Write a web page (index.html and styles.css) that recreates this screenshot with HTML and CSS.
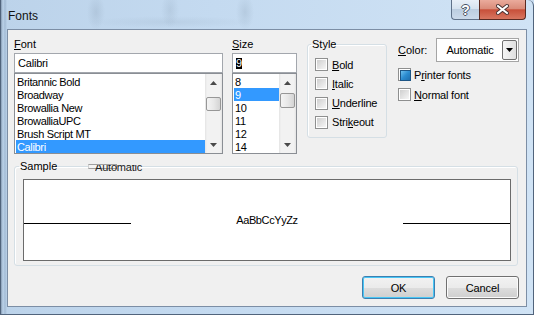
FILE: index.html
```html
<!DOCTYPE html>
<html lang="en">
<head>
<meta charset="utf-8">
<title>Fonts</title>
<link rel="stylesheet" href="styles.css">
</head>
<body>
<div class="window">
  <div class="titlebar">
    <span class="title">Fonts</span>
    <div class="caption">
      <div class="cap help"><span class="q">?</span></div>
      <div class="cap close">
        <svg width="13" height="11" viewBox="0 0 13 11"><path d="M2 2 L11 9 M11 2 L2 9" stroke="#4a3030" stroke-width="4" stroke-linecap="square"/><path d="M2 2 L11 9 M11 2 L2 9" stroke="#fff" stroke-width="2" stroke-linecap="square"/></svg>
      </div>
    </div>
  </div>
  <div class="client">
    <div class="top">
      <div class="col col-font">
        <div class="label"><u>F</u>ont</div>
        <div class="textbox">Calibri</div>
        <div class="listbox">
          <div class="items">
            <div class="item">Britannic Bold</div>
            <div class="item">Broadway</div>
            <div class="item">Browallia New</div>
            <div class="item">BrowalliaUPC</div>
            <div class="item">Brush Script MT</div>
            <div class="item sel">Calibri</div>
          </div>
          <div class="vscroll">
            <div class="sb-btn"><svg width="7" height="4" viewBox="0 0 7 4"><path d="M3.5 0 L7 4 L0 4Z" fill="#4a4a4a"/></svg></div>
            <div class="sb-track"><div class="thumb thumb-font"></div></div>
            <div class="sb-btn"><svg width="7" height="4" viewBox="0 0 7 4"><path d="M0 0 L7 0 L3.5 4Z" fill="#4a4a4a"/></svg></div>
          </div>
        </div>
      </div>
      <div class="col col-size">
        <div class="label"><u>S</u>ize</div>
        <div class="textbox"><span class="seltext">9</span></div>
        <div class="listbox">
          <div class="items">
            <div class="item">8</div>
            <div class="item sel">9</div>
            <div class="item">10</div>
            <div class="item">11</div>
            <div class="item">12</div>
            <div class="item">14</div>
          </div>
          <div class="vscroll">
            <div class="sb-btn"><svg width="7" height="4" viewBox="0 0 7 4"><path d="M3.5 0 L7 4 L0 4Z" fill="#4a4a4a"/></svg></div>
            <div class="sb-track"><div class="thumb thumb-size"></div></div>
            <div class="sb-btn"><svg width="7" height="4" viewBox="0 0 7 4"><path d="M0 0 L7 0 L3.5 4Z" fill="#4a4a4a"/></svg></div>
          </div>
        </div>
      </div>
      <fieldset class="group style-group">
        <legend>Style</legend>
        <div class="checks">
          <div class="check"><span class="box"></span><span><u>B</u>old</span></div>
          <div class="check"><span class="box"></span><span><u>I</u>talic</span></div>
          <div class="check"><span class="box"></span><span><u>U</u>nderline</span></div>
          <div class="check"><span class="box"></span><span>Stri<u>k</u>eout</span></div>
        </div>
      </fieldset>
      <div class="col col-color">
        <div class="color-row">
          <span><u>C</u>olor:</span>
          <div class="dropdown">
            <span class="dd-text">Automatic</span>
            <span class="dd-btn"><svg width="7" height="4" viewBox="0 0 7 4"><path d="M0 0 L7 0 L3.5 4Z" fill="#000"/></svg></span>
          </div>
        </div>
        <div class="check check-printer"><span class="box mixed"></span><span>P<u>r</u>inter fonts</span></div>
        <div class="check check-normal"><span class="box"></span><span><u>N</u>ormal font</span></div>
      </div>
    </div>
    <fieldset class="group sample-group">
      <legend>Sample</legend>
      <div class="sample-box">
        <span class="rule"></span>
        <span class="sample-text">AaBbCcYyZz</span>
        <span class="rule"></span>
      </div>
    </fieldset>
    <div class="ghost-rect"></div>
    <div class="ghost-text"><span>Automatic</span></div>
    <div class="buttons">
      <div class="btn default">OK</div>
      <div class="btn">Cancel</div>
    </div>
  </div>
</div>
</body>
</html>
```

FILE: styles.css
```css
* { box-sizing: border-box; }
html, body { margin: 0; padding: 0; }
body {
  width: 534px;
  height: 315px;
  overflow: hidden;
  background: #c8dcf0;
  font-family: "Liberation Sans", Arial, sans-serif;
  font-size: 11px;
  color: #000;
}
u { text-decoration: underline; text-underline-offset: 1px; }

.window {
  width: 534px;
  height: 315px;
  display: flex;
  flex-direction: column;
  border: 1px solid #51647c;
  border-top: 0;
  border-radius: 0 6px 0 0;
  background:
    linear-gradient(90deg, rgba(90,110,135,.55) 0, rgba(200,220,240,0) 2px, rgba(120,145,175,.35) 4px, rgba(200,220,240,0) 6px),
    radial-gradient(ellipse 9px 18px at 95px 12px, rgba(110,130,150,.18), rgba(110,130,150,0)),
    radial-gradient(ellipse 9px 18px at 169px 10px, rgba(110,130,150,.15), rgba(110,130,150,0)),
    radial-gradient(ellipse 9px 18px at 244px 12px, rgba(110,130,150,.18), rgba(110,130,150,0)),
    radial-gradient(ellipse 85px 6px at 170px 22px, rgba(120,140,160,.12), rgba(120,140,160,0)),
    linear-gradient(90deg, #bcd3ea 0%, #c4daf0 40%, #d0e3f5 100%);
}

.titlebar {
  flex: none;
  height: 29px;
  display: flex;
  align-items: flex-start;
}
.title {
  margin: 9px 0 0 7px;
  font-size: 12px;
  line-height: 14px;
  color: #111;
}
.caption {
  margin-left: auto;
  margin-right: 7px;
  display: flex;
  height: 20px;
}
.cap {
  height: 20px;
  display: flex;
  align-items: center;
  justify-content: center;
}
.help {
  width: 28px;
  border: 1px solid #5f7189;
  border-top: 0;
  border-right: 0;
  border-radius: 0 0 0 4px;
  background: linear-gradient(#e8eff8, #d6e2ef 45%, #bccde0 50%, #cbdaeb);
}
.close {
  width: 47px;
  border: 1px solid #5a2a22;
  border-top: 0;
  border-radius: 0 0 4px 0;
  background: linear-gradient(#eaab9c, #da8c7a 45%, #c8503a 52%, #d87660);
}
.q {
  color: #fff;
  font-weight: bold;
  font-size: 14px;
  line-height: 16px;
  text-shadow: 1px 0 0 #4a5566, -1px 0 0 #4a5566, 0 1px 0 #4a5566, 0 -1px 0 #4a5566;
}

.client {
  flex: none;
  position: relative;
  margin: 0 6px;
  height: 278px;
  border: 1px solid #7c8ea5;
  background: #f0f0f0;
  display: flex;
  flex-direction: column;
}

.top {
  display: flex;
  align-items: flex-start;
  padding: 7px 0 0 6px;
}
.label {
  height: 14px;
  line-height: 14px;
  margin-bottom: 2px;
}
.col-font { width: 209px; margin-right: 9px; }
.col-size { width: 65px; margin-right: 10px; }
.col-color { width: 121px; margin-left: 11px; }

.textbox {
  height: 20px;
  border: 1px solid #a3a7ad;
  background: #fff;
  padding-left: 3px;
  line-height: 18px;
  letter-spacing: -0.2px;
}
.seltext {
  display: inline-block;
  background: #000;
  color: #fff;
  line-height: 11px;
  vertical-align: middle;
  margin-top: -2px;
}

.listbox {
  height: 81px;
  border: 1px solid #8a8e94;
  background: #fff;
  display: flex;
}
.items {
  flex: 1;
  padding: 1px 0 0 1px;
  overflow: hidden;
}
.item {
  height: 13px;
  line-height: 13px;
  padding: 1px 0 0 1px;
  white-space: nowrap;
  letter-spacing: -0.35px;
}
.item.sel { background: #3399ff; color: #fff; }

.vscroll {
  width: 17px;
  display: flex;
  flex-direction: column;
  background: linear-gradient(90deg, #e3e3e3, #f2f2f2 2px, #f2f2f2 15px, #e3e3e3);
}
.sb-btn {
  height: 17px;
  display: flex;
  align-items: center;
  justify-content: center;
}
.sb-track { flex: 1; }
.thumb {
  margin: 0 auto;
  width: 15px;
  border: 1px solid #979797;
  border-radius: 2px;
  background: linear-gradient(90deg, #f4f4f4, #e8e8e8 50%, #d4d4d4);
}
.thumb-font { margin-top: 6px; height: 14px; }
.thumb-size { margin-top: 2px; height: 15px; }

.group {
  margin: 0;
  min-width: 0;
  border: 1px solid #d5dfe5;
  border-radius: 3px;
  box-shadow: inset 1px 1px 0 #fff;
}
.group legend {
  line-height: 14px;
  padding: 0 1px;
  margin-left: -4px;
}
.style-group {
  width: 80px;
  padding: 7px 0 8px 7px;
}
.checks {
  display: flex;
  flex-direction: column;
  gap: 6.33px;
}
.check {
  display: flex;
  align-items: center;
  height: 13px;
  gap: 4px;
  letter-spacing: -0.2px;
}
.box {
  flex: none;
  width: 13px;
  height: 13px;
  border: 1px solid #8e8f8f;
  background: #fff;
  padding: 1px;
}
.box::after {
  content: "";
  display: block;
  width: 9px;
  height: 9px;
  background: linear-gradient(135deg, #cfcfcf, #f6f6f6);
}
.box.mixed::after {
  border: 1px solid #1c5585;
  background: linear-gradient(135deg, #6cc0ef, #2b8cd0 50%, #1f6fae);
}

.color-row {
  display: flex;
  align-items: center;
  height: 24px;
  margin-top: 1px;
}
.dropdown {
  margin-left: auto;
  width: 83px;
  height: 24px;
  border: 1px solid #a5a5a5;
  background: #fff;
  display: flex;
  padding: 1px;
}
.dd-text {
  flex: 1;
  text-align: center;
  line-height: 20px;
  letter-spacing: -0.2px;
}
.dd-btn {
  width: 15px;
  border: 1px solid #707070;
  border-radius: 2px;
  background: linear-gradient(90deg, #f4f4f4, #e0e0e0);
  display: flex;
  align-items: center;
  justify-content: center;
}
.check-printer { margin-top: 6px; gap: 3px; }
.check-normal { margin-top: 7px; gap: 3px; }

.sample-group {
  margin: 5px 8px 0 6px;
  padding: 6px 6px 4px 8px;
}
.sample-box {
  height: 82px;
  border: 1px solid #6b6b6b;
  background: #fff;
  display: flex;
  justify-content: space-between;
  align-items: flex-start;
}
.rule {
  width: 107px;
  height: 1px;
  background: #000;
  margin-top: 43px;
}
.sample-text {
  margin-top: 34px;
  line-height: 13px;
  letter-spacing: -0.4px;
}

.ghost-rect {
  position: absolute;
  left: 80px;
  top: 134px;
  width: 29px;
  height: 5px;
  border: 1px solid #a0a0a0;
  border-left-color: #d0d0d0;
  background: #f4f4f4;
}
.ghost-text {
  position: absolute;
  left: 87px;
  top: 135px;
  width: 52px;
  height: 6px;
  overflow: hidden;
}
.ghost-text span {
  display: block;
  margin-top: -4px;
  line-height: 13px;
  letter-spacing: -0.2px;
  color: #222;
}

.buttons {
  display: flex;
  justify-content: flex-end;
  gap: 11px;
  padding-right: 7px;
  margin-top: 10px;
}
.btn {
  width: 73px;
  height: 23px;
  border: 1px solid #707070;
  border-radius: 3px;
  background: linear-gradient(#f2f2f2 0, #ebebeb 50%, #dddddd 51%, #cfcfcf 100%);
  box-shadow: inset 0 0 0 1px #fbfbfb;
  display: flex;
  align-items: center;
  justify-content: center;
  letter-spacing: -0.1px;
}
.btn.default {
  border-color: #3c7fb1;
  box-shadow: inset 0 0 0 1px #48c6f5;
}
```
